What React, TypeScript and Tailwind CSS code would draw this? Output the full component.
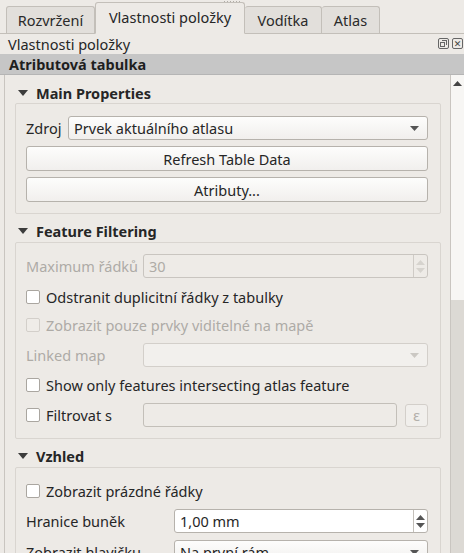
import React from "react";

const F = { fontFamily: '"Noto Sans", "DejaVu Sans", sans-serif' };
const T = "text-[14.5px] leading-[20px]";

function Tri() {
  return (
    <svg width="10" height="7" viewBox="0 0 10 7" className="shrink-0">
      <path d="M0 0 L10 0 L5 6 Z" fill="#3c3c3c" />
    </svg>
  );
}

function SectionHeader({ title }: { title: string }) {
  return (
    <div className="flex items-center h-[22px] pl-[13px] gap-[8px]">
      <Tri />
      <span className={`font-bold ${T} text-[#262626]`}>{title}</span>
    </div>
  );
}

function Checkbox({ label, disabled }: { label: string; disabled?: boolean }) {
  return (
    <div className="flex items-center h-[24px] gap-[6px]">
      <div
        className={`w-[14px] h-[14px] rounded-[2px] border shrink-0 ${
          disabled ? "border-[#d3cfca] bg-[#efece8]" : "border-[#aaa6a0] bg-white"
        }`}
      />
      <span className={`${T} whitespace-nowrap ${disabled ? "text-[#aeaba6]" : "text-[#262626]"}`}>{label}</span>
    </div>
  );
}

function ComboArrow({ disabled }: { disabled?: boolean }) {
  return (
    <svg width="9" height="5" viewBox="0 0 9 5">
      <path d="M0 0 L9 0 L4.5 5 Z" fill={disabled ? "#cbc8c3" : "#555"} />
    </svg>
  );
}

function Combo({ text, disabled }: { text?: string; disabled?: boolean }) {
  return (
    <div
      className={`flex-1 h-[24px] rounded-[3px] border flex items-center justify-between pl-[5px] pr-[8px] ${
        disabled
          ? "border-[#d3cfca] bg-[#f2f0ed]"
          : "border-[#b6b2ac] bg-gradient-to-b from-[#fdfdfc] to-[#f1efed]"
      }`}
    >
      <span className={`${T} text-[#262626]`}>{text}</span>
      <ComboArrow disabled={disabled} />
    </div>
  );
}

function SpinArrows({ disabled }: { disabled?: boolean }) {
  const c = disabled ? "#d6d3ce" : "#555";
  return (
    <div
      className={`w-[14px] h-full border-l flex flex-col items-center justify-center gap-[3px] ${
        disabled ? "border-[#cfcbc6]" : "border-[#c4c0ba]"
      }`}
    >
      <svg width="9" height="5" viewBox="0 0 9 5"><path d="M0 5 L9 5 L4.5 0 Z" fill={c} /></svg>
      <svg width="9" height="5" viewBox="0 0 9 5"><path d="M0 0 L9 0 L4.5 5 Z" fill={c} /></svg>
    </div>
  );
}

function Spin({ text, disabled }: { text: string; disabled?: boolean }) {
  return (
    <div
      className={`flex-1 h-[24px] rounded-[3px] border flex items-center justify-between ${
        disabled ? "border-[#c9c5c0] bg-[#eeebe7]" : "border-[#b6b2ac] bg-white"
      }`}
    >
      <span className={`pl-[5px] ${T} ${disabled ? "text-[#aeaba6]" : "text-[#262626]"}`}>{text}</span>
      <SpinArrows disabled={disabled} />
    </div>
  );
}

function Button({ text }: { text: string }) {
  return (
    <div className={`h-[25px] rounded-[3px] border border-[#b6b2ac] bg-gradient-to-b from-[#fdfdfc] to-[#f1efed] flex items-center justify-center ${T} text-[#262626]`}>
      {text}
    </div>
  );
}

function Group({ children, className }: { children: React.ReactNode; className?: string }) {
  return (
    <div className={`ml-[10px] mr-[9px] border border-[#d9d5d0] rounded-[2px] pl-[10px] pr-[12px] ${className ?? ""}`}>
      {children}
    </div>
  );
}

export default function App() {
  return (
    <div style={F} className="w-[464px] h-[553px] overflow-hidden bg-[#edeae6] relative flex flex-col text-[#262626]">
      {/* drag handle dots */}
      <div className="absolute left-[224px] top-[1px] flex gap-[2px]">
        {[0, 1, 2, 3, 4, 5].map((i) => (
          <div key={i} className="w-[1px] h-[1px] bg-[#b0aca6]" />
        ))}
      </div>
      {/* Tabs */}
      <div className="h-[34px] flex items-end pl-[6px] border-b border-[#c3bfb9] shrink-0">
        <div className={`h-[27px] w-[89px] border border-b-0 border-[#c3bfb9] bg-[#e2dfdb] rounded-t-[3px] flex items-center justify-center ${T} text-[#2a2a2a]`}>
          Rozvržení
        </div>
        <div className={`h-[32px] w-[150px] border border-[#c3bfb9] border-b-[#edeae6] -mb-[1px] bg-[#edeae6] rounded-t-[3px] flex items-center justify-center pb-[2px] ${T} text-[#262626]`}>
          Vlastnosti položky
        </div>
        <div className={`h-[27px] w-[77px] border border-b-0 border-l-0 border-[#c3bfb9] bg-[#e2dfdb] rounded-t-[3px] flex items-center justify-center pb-[1px] ${T} text-[#2a2a2a]`}>
          Vodítka
        </div>
        <div className={`h-[27px] w-[58px] border border-b-0 border-l-0 border-[#c3bfb9] bg-[#e2dfdb] rounded-t-[3px] flex items-center justify-center pb-[1px] ${T} text-[#2a2a2a]`}>
          Atlas
        </div>
      </div>
      {/* Dock title */}
      <div className="h-[19px] flex items-center justify-between pl-[8px] pr-[1px] shrink-0">
        <span className={`${T} text-[#262626]`}>Vlastnosti položky</span>
        <div className="flex gap-[3px]">
          <div className="w-[11px] h-[11px] border border-[#666] rounded-[2px] relative">
            <div className="absolute left-[1px] top-[3px] w-[5px] h-[5px] border border-[#666]" />
            <div className="absolute left-[3px] top-[1px] w-[5px] h-[5px] border-t border-r border-[#666]" />
          </div>
          <div className="w-[11px] h-[11px] border border-[#666] rounded-[2px] flex items-center justify-center text-[9px] leading-none font-bold text-[#444]">
            ✕
          </div>
        </div>
      </div>
      {/* Grey header */}
      <div className="h-[21px] mt-[1px] bg-[#c6c6c6] border-b border-[#b5b5b5] flex items-center pl-[9px] shrink-0">
        <span className={`font-bold ${T} text-[#1e1e1e]`}>Atributová tabulka</span>
      </div>
      {/* Scroll area */}
      <div className="flex-1 flex border-l border-[#c9c5c0] ml-[4px] min-h-0">
        <div className="flex-1 flex flex-col pt-[8px] overflow-hidden">
          <SectionHeader title="Main Properties" />
          <Group className="pt-[12px] pb-[11px] flex flex-col">
            <div className="flex items-center gap-[4px]">
              <span className={`${T} w-[38px]`}>Zdroj</span>
              <Combo text="Prvek aktuálního atlasu" />
            </div>
            <div className="mt-[6px]">
              <Button text="Refresh Table Data" />
            </div>
            <div className="mt-[6px]">
              <Button text="Atributy..." />
            </div>
          </Group>
          <div className="mt-[6px]">
            <SectionHeader title="Feature Filtering" />
          </div>
          <Group className="pt-[11px] pb-[11px] flex flex-col">
            <div className="flex items-center gap-[4px]">
              <span className={`${T} w-[113px] text-[#aeaba6]`}>Maximum řádků</span>
              <Spin text="30" disabled />
            </div>
            <div className="mt-[7px]">
              <Checkbox label="Odstranit duplicitní řádky z tabulky" />
            </div>
            <div className="mt-[4px]">
              <Checkbox label="Zobrazit pouze prvky viditelné na mapě" disabled />
            </div>
            <div className="mt-[6px] flex items-center gap-[4px]">
              <span className={`${T} w-[113px] text-[#aeaba6]`}>Linked map</span>
              <Combo disabled />
            </div>
            <div className="mt-[6px]">
              <Checkbox label="Show only features intersecting atlas feature" />
            </div>
            <div className="mt-[6px] flex items-center gap-[4px]">
              <div className="w-[113px]">
                <Checkbox label="Filtrovat s" />
              </div>
              <div className="flex-1 h-[24px] rounded-[3px] border border-[#c3bfb9] bg-[#eeebe7]" />
              <div className="ml-[4px] w-[23px] h-[23px] rounded-[3px] border border-[#d3cfca] bg-[#f1efec] flex items-center justify-center text-[15px] text-[#b3b0ab]">
                ε
              </div>
            </div>
          </Group>
          <div className="mt-[6px]">
            <SectionHeader title="Vzhled" />
          </div>
          <Group className="pt-[11px] pb-[11px] flex flex-col">
            <Checkbox label="Zobrazit prázdné řádky" />
            <div className="mt-[6px] flex items-center gap-[4px]">
              <span className={`${T} w-[144px]`}>Hranice buněk</span>
              <Spin text="1,00 mm" />
            </div>
            <div className="mt-[7px] flex items-center gap-[4px]">
              <span className={`${T} w-[144px]`}>Zobrazit hlavičku</span>
              <Combo text="Na první rám" />
            </div>
          </Group>
        </div>
        {/* Scrollbar */}
        <div className="w-[14px] border-l border-[#c9c5c0] flex flex-col bg-[#dcd9d4] shrink-0">
          <div className="h-[225px] bg-[#f7f6f4] flex justify-center pt-[6px]">
            <svg width="9" height="5" viewBox="0 0 9 5"><path d="M0 5 L9 5 L4.5 0 Z" fill="#444" /></svg>
          </div>
        </div>
      </div>
    </div>
  );
}
